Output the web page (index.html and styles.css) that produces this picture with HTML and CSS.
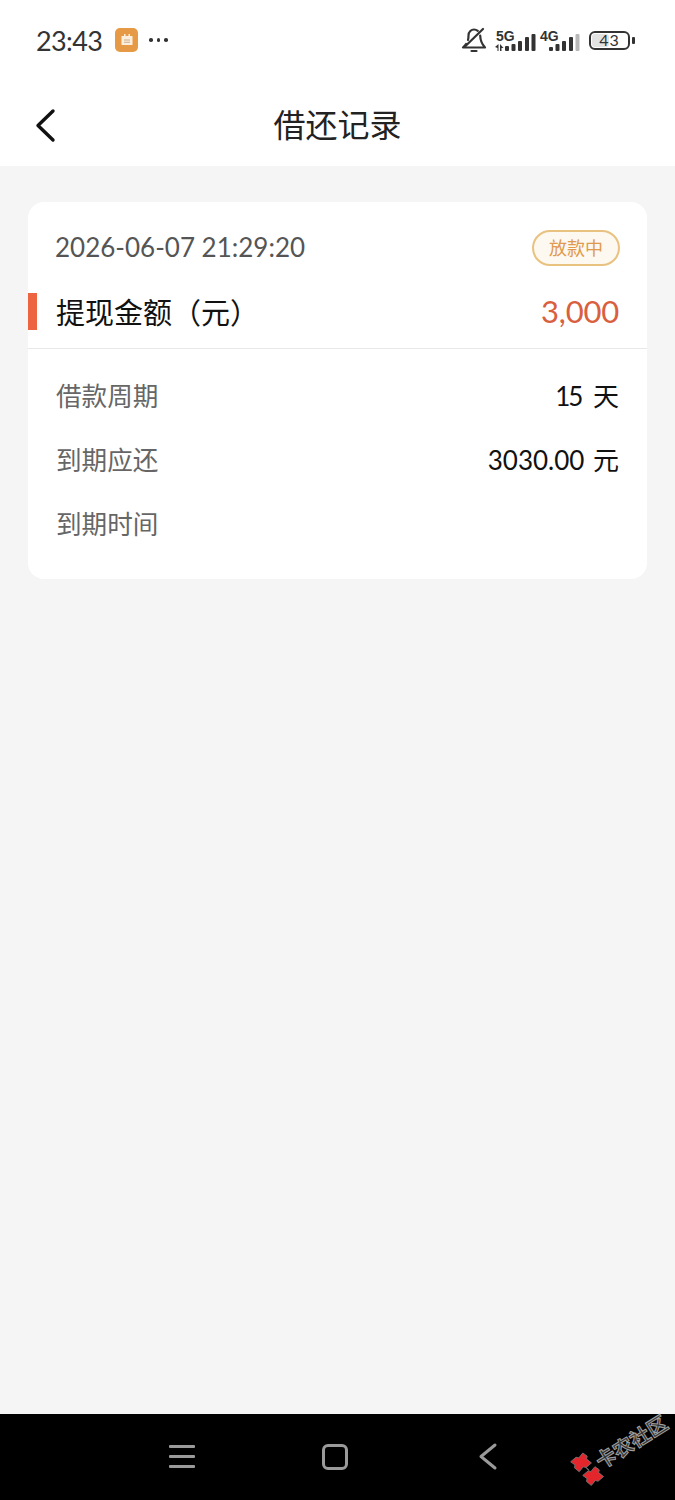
FILE: index.html
```html
<!DOCTYPE html>
<html lang="zh-CN">
<head>
<meta charset="utf-8">
<title>借还记录</title>
<link rel="stylesheet" href="styles.css">
</head>
<body>
<div class="screen">
  <header class="top">
    <div class="status">
      <div class="status-left">
        <span class="clock">23:43</span>
        <span class="app-icon">
          <svg width="14" height="14" viewBox="0 0 14 14">
            <path fill="#fbeedd" d="M1.500 3 H12.500 V12 H1.500 Z"/>
            <path fill="#fbeedd" d="M4 1 H5.500 V3 H4 Z M8.500 1 H10 V3 H8.500 Z"/>
            <path fill="#c9ad8a" d="M4 6.500 H10 V7.500 H4 Z M4 8.800 H10 V9.800 H4 Z"/>
          </svg>
        </span>
        <span class="more">
          <i class="dot"></i><i class="dot"></i><i class="dot"></i>
        </span>
      </div>
      <div class="status-right">
        <svg class="bell" width="26" height="26" viewBox="0 0 26 26" fill="none" stroke="#333" stroke-width="2.2" stroke-linecap="round" stroke-linejoin="round">
          <path d="M22 2 L4 19.500"/>
          <path d="M7 13 C7.500 11.500 7.500 10 7.500 8.500 C7.500 4.500 10.500 2.500 13 2.500 C14.500 2.500 15.800 3 16.800 3.800"/>
          <path d="M19.200 8.500 C19.300 13 20.800 17 24 20.500 L2 20.500 C3 19.500 4 18.500 5 17"/>
          <path d="M10.500 24 L15.500 24"/>
        </svg>
        <div class="signal">
          <span class="net">5G</span>
          <svg width="41" height="18" viewBox="0 0 41 18" fill="#333">
            <path d="M0 14 L3.500 11 V18 H2.500 V15 Z M5 11 L8.500 15 H6.500 V18 H5 Z"/>
            <rect x="10" y="13" width="4" height="5" rx="1"/>
            <rect x="16.500" y="11" width="4" height="7" rx="1"/>
            <rect x="23" y="8" width="4" height="10" rx="1"/>
            <rect x="30" y="4" width="4" height="14" rx="1"/>
            <rect x="36.500" y="1" width="4" height="17" rx="1"/>
          </svg>
        </div>
        <div class="signal signal-4g">
          <span class="net">4G</span>
          <svg width="31" height="18" viewBox="0 0 31 18" fill="#333">
            <rect x="0" y="14" width="4" height="4" rx="1"/>
            <rect x="6.500" y="11" width="4" height="7" rx="1"/>
            <rect x="13" y="8" width="4" height="10" rx="1"/>
            <rect x="20" y="4" width="4" height="14" rx="1"/>
            <rect class="bar-off" x="26.500" y="1" width="4" height="17" rx="1"/>
          </svg>
        </div>
        <div class="battery">
          <div class="battery-body"><span class="battery-fill"></span><span class="battery-num">43</span></div>
          <span class="battery-tip"></span>
        </div>
      </div>
    </div>
    <nav class="nav">
      <svg class="back" width="24" height="36" viewBox="0 0 24 36" fill="none" stroke="#111" stroke-width="3.4" stroke-linecap="round" stroke-linejoin="round"><path d="M19 3 L4 17.500 L19 32"/></svg>
      <h1 class="title">借还记录</h1>
    </nav>
  </header>

  <main class="content">
    <section class="card">
      <div class="card-head">
        <span class="date">2026-06-07 21:29:20</span>
        <span class="badge">放款中</span>
      </div>
      <div class="amount-row">
        <span class="amount-label">提现金额（元）</span>
        <span class="amount">3,000</span>
      </div>
      <div class="rows">
        <div class="row"><span class="row-label">借款周期</span><span class="row-value"><span class="tight">15</span> 天</span></div>
        <div class="row"><span class="row-label">到期应还</span><span class="row-value">3030.00 元</span></div>
        <div class="row"><span class="row-label">到期时间</span><span class="row-value"></span></div>
      </div>
    </section>
  </main>

  <footer class="navbar">
    <div class="menu-icon"><i></i><i></i><i></i></div>
    <div class="home-icon"></div>
    <svg class="nav-back" width="20" height="30" viewBox="0 0 20 30" fill="none" stroke="#9a9a9a" stroke-width="3" stroke-linecap="round" stroke-linejoin="round"><path d="M17 3 L3 14.500 L17 26"/></svg>
  </footer>

  <div class="watermark">
    <svg class="wm-logo" width="22" height="34" viewBox="0 0 22 34">
      <path fill="#e3262c" stroke="#777" stroke-width="0.8" d="M1 2 L8 1 L10 3 L16 1 L18 6 L16 8 L18 14 L11 15 L9 13 L3 15 L1 9 L3 7 Z"/>
      <path fill="#e3262c" stroke="#777" stroke-width="0.8" d="M4 20 L11 19 L13 21 L19 19 L21 24 L19 26 L21 32 L14 33 L12 31 L6 33 L4 27 L6 25 Z"/>
      <path fill="none" stroke="#888" stroke-width="1" d="M11 15 L12 19"/>
    </svg>
    <span class="wm-text">卡农社区</span>
  </div>
</div>
</body>
</html>
```

FILE: styles.css
```css
* { box-sizing: border-box; }
html, body { margin: 0; padding: 0; }
body {
  width: 675px;
  height: 1500px;
  overflow: hidden;
  background: #f5f5f5;
  font-family: "Lato", "Noto Sans CJK SC", sans-serif;
}
.screen {
  position: relative;
  width: 675px;
  height: 1500px;
  display: flex;
  flex-direction: column;
  overflow: hidden;
}
.top { background: #fff; height: 166px; flex: none; }
.status {
  height: 80px;
  padding: 0 40px 0 36px;
  display: flex;
  justify-content: space-between;
  align-items: center;
}
.status-left { display: flex; align-items: center; }
.clock { font-size: 27px; color: #333; letter-spacing: -0.6px; width: 79px; }
.app-icon {
  width: 23px; height: 24px; border-radius: 5px; background: #e79a45;
  display: flex; align-items: center; justify-content: center;
}
.more { display: flex; gap: 4px; margin-left: 11px; }
.dot { width: 3.5px; height: 3.5px; border-radius: 50%; background: #333; }
.status-right { display: flex; align-items: center; }
.bell { margin-right: 8px; }
.signal { position: relative; width: 41px; height: 22px; display: flex; align-items: flex-end; }
.signal-4g { width: 40px; margin-left: 4px; }
.signal-4g svg { margin-left: 9px; }
.net {
  position: absolute; left: 1px; top: 0;
  font-size: 14px; font-weight: 700; color: #333; line-height: 14px;
  font-family: "Liberation Sans", sans-serif;
}
.signal-4g .net { left: 0; top: 0; }
.bar-off { fill: #b8b8b8; }
.battery { display: flex; align-items: center; margin-left: 9px; }
.battery-body {
  position: relative; width: 41px; height: 19px; border: 2px solid #333; border-radius: 6px;
  display: flex; align-items: center; justify-content: center; overflow: hidden;
}
.battery-fill { position: absolute; left: 1px; top: 1px; bottom: 1px; width: 17px; background: #e2e2e2; border-radius: 3px; }
.battery-num { position: relative; font-size: 16px; color: #333; line-height: 1; letter-spacing: 1px; }
.battery-tip { width: 3px; height: 7px; margin-left: 2px; background: #333; border-radius: 1px; }

.nav { position: relative; height: 86px; display: flex; align-items: center; justify-content: center; }
.back { position: absolute; left: 34px; top: 28px; }
.title { margin: 0; font-size: 32px; font-weight: 400; color: #222; line-height: 1; font-family: "Noto Sans CJK SC", sans-serif; }

.content { flex: 1; padding: 36px 28px 0; }
.card { height: 377px; background: #fff; border-radius: 16px; }
.card-head {
  height: 92px; padding: 0 27px 0 27px;
  display: flex; justify-content: space-between; align-items: center;
}
.date { font-size: 26px; color: #555; padding-bottom: 3px; }
.badge {
  width: 88px; height: 36px; border: 2px solid #e9c27f; border-radius: 18px;
  background: #fdf8f0; color: #e09a4e; font-size: 18px; padding-bottom: 3px;
  display: flex; align-items: center; justify-content: center;
  font-family: "Noto Sans CJK SC", sans-serif;
}
.amount-row {
  position: relative;
  height: 56px; padding: 0 28px 20px 28px;
  border-bottom: 1px solid #e8e8e8;
  margin-top: -1px;
  display: flex; justify-content: space-between; align-items: center;
}
.amount-row::before {
  content: ""; position: absolute; left: 0; top: 0; width: 9px; height: 37px; background: #ec6440;
}
.amount-label { font-size: 29px; color: #111; font-family: "Noto Sans CJK SC", sans-serif; }
.amount { font-size: 31px; color: #d9603f; letter-spacing: -0.2px; }
.rows { padding: 15px 28px 0 28px; }
.row { height: 64px; display: flex; justify-content: space-between; align-items: center; }
.row-label { font-size: 25.600px; color: #666; font-family: "Noto Sans CJK SC", sans-serif; padding-bottom: 3px; }
.row-value { font-size: 26px; color: #111; word-spacing: 2px; padding-bottom: 3px; }
.tight { letter-spacing: -2px; margin-right: 3px; }

.navbar { position: relative; height: 86px; flex: none; background: #000; }
.menu-icon { position: absolute; left: 169px; top: 31px; width: 26px; display: flex; flex-direction: column; gap: 7px; }
.menu-icon i { height: 3px; background: #9a9a9a; border-radius: 1px; }
.home-icon { position: absolute; left: 322px; top: 30px; width: 26px; height: 26px; border: 3px solid #9a9a9a; border-radius: 6px; }
.nav-back { position: absolute; left: 478px; top: 28px; }

.watermark {
  position: absolute; left: 570px; top: 1431px; width: 102px;
  display: flex; align-items: center; white-space: nowrap;
  transform: rotate(-32deg);
}
.wm-logo { flex: none; }
.wm-text {
  font-size: 20px; font-weight: 700; line-height: 1; margin-left: 1px;
  color: #333; -webkit-text-stroke: 1px #a0a0a0;
  font-family: "Noto Sans CJK SC", sans-serif;
}
```
